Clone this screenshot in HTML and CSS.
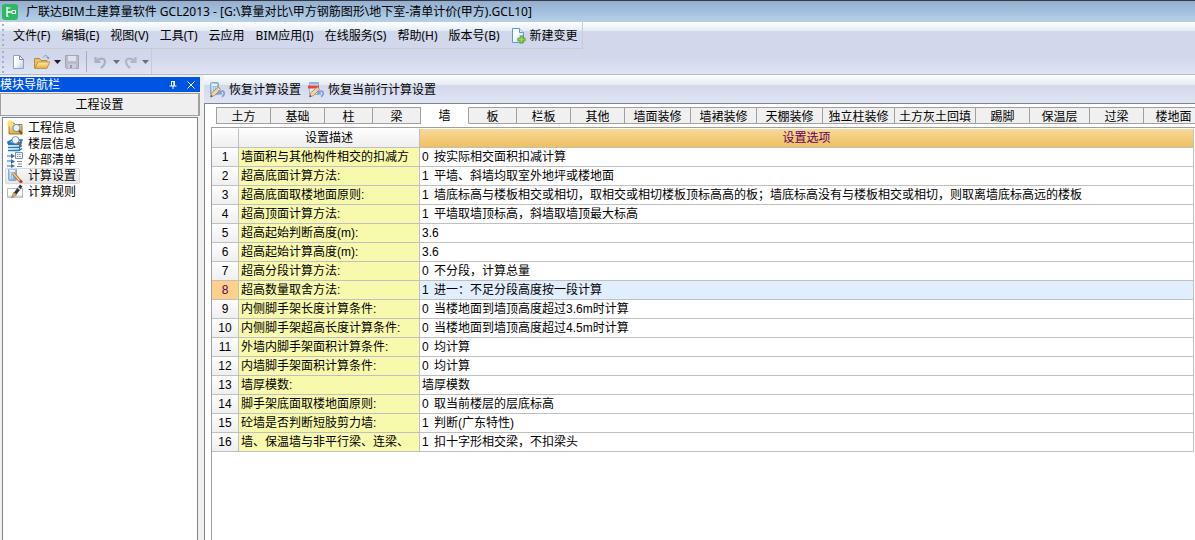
FILE: index.html
```html
<!DOCTYPE html>
<html lang="zh-CN">
<head>
<meta charset="utf-8">
<meta name="viewport" content="width=device-width, initial-scale=1">
<title>广联达BIM土建算量软件 GCL2013</title>
<link rel="stylesheet" href="styles.css">
</head>
<body>
<svg class="defs" width="0" height="0" aria-hidden="true">
  <defs>
    <linearGradient id="paper" x1="0" y1="0" x2="1" y2="1"><stop offset=".4" stop-color="#fff"/><stop offset="1" stop-color="#b4cadf"/></linearGradient>
    <linearGradient id="gold" x1="0" y1="0" x2="0" y2="1"><stop offset="0" stop-color="#fff0a8"/><stop offset="1" stop-color="#e5a83c"/></linearGradient>
    <linearGradient id="blue" x1="0" y1="0" x2="1" y2="1"><stop offset="0" stop-color="#c4dff8"/><stop offset="1" stop-color="#6a9fdb"/></linearGradient>
    <symbol id="calc" viewBox="0 0 16 16">
      <rect x="1.5" y=".5" width="8" height="12" rx="1" fill="url(#blue)" stroke="#85a9d4"/>
      <rect x="3" y="2" width="5" height="2" fill="#e8f5ff"/>
      <path d="M3 6h1M5 6h1M7 6h1M3 8h1M5 8h1M7 8h1M3 10h1M5 10h1" stroke="#fff" stroke-width="1.2"/>
    </symbol>
    <symbol id="restore" viewBox="0 0 16 16">
      <path d="M1.500 15l1-4L9.500 5l2 2.500-6 6z" fill="#f0d3a4" stroke="#a98262" stroke-width=".8"/>
      <path d="M1.500 15l.6-2.200 1.600 1.600z" fill="#5a4a48"/>
      <path d="M10 8.500v3.200h3M10.500 11c1-2.500 4.700-2.500 4.700.3 0 1.700-1 2.700-2.200 3.400" fill="none" stroke="#7c9fd6" stroke-width="1.700"/>
    </symbol>
  </defs>
</svg>

<header class="titlebar">
  <svg class="logo" viewBox="0 0 16 16" aria-hidden="true"><rect width="16" height="16" rx="3" fill="#2fb967"/><path d="M5 3v10M5 8h5" stroke="#fff" stroke-width="1.3" fill="none"/><path d="M5 4h3.500M5 12.300h1.500" stroke="#fff"/><path d="M10 6.500h3.500v3H10z" fill="none" stroke="#fff"/></svg>
  <h1 class="window-title">广联达BIM土建算量软件 GCL2013 - [G:\算量对比\甲方钢筋图形\地下室-清单计价(甲方).GCL10]</h1>
</header>

<div class="bars">
  <nav class="menubar" aria-label="主菜单">
    <button class="menu">文件(F)</button>
    <button class="menu">编辑(E)</button>
    <button class="menu">视图(V)</button>
    <button class="menu">工具(T)</button>
    <button class="menu">云应用</button>
    <button class="menu">BIM应用(I)</button>
    <button class="menu">在线服务(S)</button>
    <button class="menu">帮助(H)</button>
    <button class="menu">版本号(B)</button>
    <button class="menu with-icon"><svg class="icon" viewBox="0 0 16 16" aria-hidden="true"><path d="M1.500.5h7l4 4v10h-11z" fill="url(#paper)" stroke="#5b9ccb"/><path d="M8.500.5v4h4" fill="#d8ecf8" stroke="#5b9ccb"/><path d="M10.500 7.500v8M6.500 11.500h8" stroke="#4f9b2b" stroke-width="3.600"/><path d="M10.500 8.500v6M7.500 11.500h6" stroke="#96d65c" stroke-width="2"/></svg>新建变更</button>
  </nav>
  <div class="toolbar" role="toolbar" aria-label="标准">
    <button class="tool" aria-label="新建"><svg class="icon" viewBox="0 0 16 16"><path d="M3.500 1.500h6l4 4v9h-10z" fill="url(#paper)" stroke="#91a5bd"/><path d="M9.500 1.500v4h4z" fill="#e9f1f8" stroke="#7890ab"/></svg></button>
    <button class="tool open" aria-label="打开"><svg class="icon" viewBox="0 0 16 16"><path d="M.5 14V4.500h5l1.500 2h6V14z" fill="#ecc168" stroke="#b58a3c"/><path d="M.8 14.500l3-6.500h12l-3 6.500z" fill="url(#gold)" stroke="#c5943c"/><path d="M9 3.500c2-3 4-2 5 0" fill="none" stroke="#7f97b5"/><path d="M12.300 3h3.400l-1.500 2.500z" fill="#7f97b5"/></svg></button>
    <button class="drop" aria-label="打开选项"><svg class="arrow" viewBox="0 0 7 4"><path d="M0 0h7L3.500 4z" fill="#1c1c22"/></svg></button>
    <button class="tool" aria-label="保存" disabled><svg class="icon" viewBox="0 0 16 16"><path d="M1.500 1.500h13v13h-12l-1-1z" fill="#b7bbca" stroke="#a0a6b8"/><path d="M4 2h8v5H4z" fill="#dfe2ed"/><path d="M4 10h8v4.500H4z" fill="#c9cddb"/><path d="M6 11h2v3H6z" fill="#959bad"/></svg></button>
    <span class="divider"></span>
    <button class="tool" aria-label="撤销" disabled><svg class="icon" viewBox="0 0 16 16"><path d="M2.500 3v5h5M3 7.500C6 3.500 12.500 3.500 12 8c-.3 3-2 4.500-4 6" fill="none" stroke="#a9b0c4" stroke-width="2.200"/></svg></button>
    <button class="drop" aria-label="撤销选项" disabled><svg class="arrow" viewBox="0 0 7 4"><path d="M0 0h7L3.500 4z" fill="#6c6e79"/></svg></button>
    <button class="tool redo" aria-label="重做" disabled><svg class="icon" viewBox="0 0 16 16"><path d="M12.500 3v5h-5M12 7.500C9 3.500 2.500 3.500 3 8c.3 3 2 4.500 4 6" fill="none" stroke="#b0b6c9" stroke-width="2.200"/></svg></button>
    <button class="drop" aria-label="重做选项" disabled><svg class="arrow" viewBox="0 0 7 4"><path d="M0 0h7L3.500 4z" fill="#6c6e79"/></svg></button>
  </div>
</div>

<div class="workspace">
  <aside class="navigator">
    <div class="nav-title">
      <h2 class="nav-heading">模块导航栏</h2>
      <button class="nav-control" aria-label="固定"><svg viewBox="0 0 8 8"><path d="M2.500 0v5M2 .5h4M5.500 0v5M4.800 0v5M.5 5h7M4 5v3" stroke="#fff" fill="none"/></svg></button>
      <button class="nav-control" aria-label="关闭"><svg viewBox="0 0 8 8"><path d="M.5.5l7 7M7.500.5l-7 7" stroke="#fff" fill="none"/></svg></button>
    </div>
    <button class="group">工程设置</button>
    <ul class="nav-list">
      <li><a class="nav-item" href="#project"><svg class="icon" viewBox="0 0 16 16"><path d="M2 3h5l1 1.500h7V14H2z" fill="url(#gold)" stroke="#a77b27"/><path d="M3 0v7M0 3.500h6M1 1l4 5M5 1L1 6" stroke="#ffe066" stroke-width="1.300"/><circle cx="9.500" cy="8" r="3.500" fill="#e8f5ff" stroke="#7897b4" stroke-width="1.200"/><path d="M12 10.500l3 3.500" stroke="#8b4b20" stroke-width="2"/></svg>工程信息</a></li>
      <li><a class="nav-item" href="#floors"><svg class="icon" viewBox="0 0 16 16"><path d="M1 6l4-2h10l-2 3H1zM1 8.500h11l3-2M1 11.500h11l3-2M1 14.500h11l3-2" fill="#aad9f5" stroke="#2477b6" stroke-width="1.500"/><path d="M12.500 7v7.500" stroke="#2477b6"/><circle cx="8.500" cy="4" r="3.500" fill="#edf7ff" stroke="#899eb0"/><path d="M11 6.500l3 3" stroke="#a05b2c" stroke-width="2"/></svg>楼层信息</a></li>
      <li><a class="nav-item" href="#list"><svg class="icon" viewBox="0 0 16 16"><path d="M0 4h6M0 9h6M0 14h6" stroke="#6c9ddc" stroke-width="1.500"/><path d="M4 1.500L8 4 4 6.500zM4 7l4 2.500L4 12zM4 12l4 2-4 2z" fill="#3569b5"/><path d="M8.500.5h7v6h-7z" fill="#eef4fb" stroke="#7890ae"/><path d="M10 2.500h4M10 4.500h4" stroke="#7187a4" stroke-dasharray="1 .7"/><path d="M10 9.500h5M11 12h4M10 14.500h5" stroke="#7c828b"/></svg>外部清单</a></li>
      <li><a class="nav-item current" href="#calculation" aria-current="page"><svg class="icon" viewBox="0 0 16 16"><use href="#calc"/><path d="M6 5l8 9" stroke="#a66a32" stroke-width="3"/><path d="M6 5l7 8" stroke="#f5cf7e" stroke-width="1.500"/><path d="M13 12.500l2 2.200" stroke="#bc3434" stroke-width="2.500"/></svg>计算设置</a></li>
      <li><a class="nav-item" href="#rules"><svg class="icon" viewBox="0 0 16 16"><path d="M.5 4.500h15v9H.5z" fill="#fff" stroke="#b5babf"/><path d="M1 11.500h14v2H1z" fill="#d2d6da"/><path d="M7 8.500l6-8 2.500 2-6 8z" fill="#30343a"/><path d="M11 3.500l2 2" stroke="#eee" stroke-width="1.200"/><path d="M6.500 8.500l3 2.500L4.500 14z" fill="#dcb45c" stroke="#8e692e" stroke-width=".6"/></svg>计算规则</a></li>
    </ul>
  </aside>

  <main class="content">
    <div class="actions">
      <button class="action"><svg class="icon" viewBox="0 0 16 16" aria-hidden="true"><use href="#calc"/><use href="#restore"/></svg>恢复计算设置</button>
      <button class="action"><svg class="icon" viewBox="0 0 16 16" aria-hidden="true"><path d="M1.500.5h9v12h-9z" fill="#dce9f7" stroke="#9bb4d1"/><path d="M1 .5h10v2H1z" fill="#8fb5e0"/><path d="M0 3.500h11v3H0z" fill="#e8443c"/><use href="#restore"/></svg>恢复当前行计算设置</button>
    </div>
    <div class="sheet">
      <div class="tabs" role="tablist">
        <button class="tab c2" role="tab">土方</button>
        <button class="tab c2" role="tab">基础</button>
        <button class="tab c1" role="tab">柱</button>
        <button class="tab c1" role="tab">梁</button>
        <button class="tab c1 active" role="tab" aria-selected="true">墙</button>
        <button class="tab c1" role="tab">板</button>
        <button class="tab c2" role="tab">栏板</button>
        <button class="tab c2" role="tab">其他</button>
        <button class="tab c4" role="tab">墙面装修</button>
        <button class="tab c4" role="tab">墙裙装修</button>
        <button class="tab c4" role="tab">天棚装修</button>
        <button class="tab c5" role="tab">独立柱装修</button>
        <button class="tab c6" role="tab">土方灰土回填</button>
        <button class="tab c2" role="tab">踢脚</button>
        <button class="tab c3" role="tab">保温层</button>
        <button class="tab c2" role="tab">过梁</button>
        <button class="tab c3" role="tab">楼地面</button>
      </div>
      <div class="grid-frame">
        <table class="grid">
          <colgroup><col class="col-num"><col class="col-desc"><col></colgroup>
          <thead><tr><th class="corner"></th><th>设置描述</th><th class="selected-head">设置选项</th></tr></thead>
          <tbody>
            <tr><th>1</th><td class="desc">墙面积与其他构件相交的扣减方</td><td><span class="code">0</span>按实际相交面积扣减计算</td></tr>
            <tr><th>2</th><td class="desc">超高底面计算方法:</td><td><span class="code">1</span>平墙、斜墙均取室外地坪或楼地面</td></tr>
            <tr><th>3</th><td class="desc">超高底面取楼地面原则:</td><td><span class="code">1</span>墙底标高与楼板相交或相切，取相交或相切楼板顶标高高的板；墙底标高没有与楼板相交或相切，则取离墙底标高远的楼板</td></tr>
            <tr><th>4</th><td class="desc">超高顶面计算方法:</td><td><span class="code">1</span>平墙取墙顶标高，斜墙取墙顶最大标高</td></tr>
            <tr><th>5</th><td class="desc">超高起始判断高度(m):</td><td>3.6</td></tr>
            <tr><th>6</th><td class="desc">超高起始计算高度(m):</td><td>3.6</td></tr>
            <tr><th>7</th><td class="desc">超高分段计算方法:</td><td><span class="code">0</span>不分段，计算总量</td></tr>
            <tr class="selected"><th>8</th><td class="desc">超高数量取舍方法:</td><td><span class="code">1</span>进一：不足分段高度按一段计算</td></tr>
            <tr><th>9</th><td class="desc">内侧脚手架长度计算条件:</td><td><span class="code">0</span>当楼地面到墙顶高度超过3.6m时计算</td></tr>
            <tr><th>10</th><td class="desc">内侧脚手架超高长度计算条件:</td><td><span class="code">0</span>当楼地面到墙顶高度超过4.5m时计算</td></tr>
            <tr><th>11</th><td class="desc">外墙内脚手架面积计算条件:</td><td><span class="code">0</span>均计算</td></tr>
            <tr><th>12</th><td class="desc">内墙脚手架面积计算条件:</td><td><span class="code">0</span>均计算</td></tr>
            <tr><th>13</th><td class="desc">墙厚模数:</td><td>墙厚模数</td></tr>
            <tr><th>14</th><td class="desc">脚手架底面取楼地面原则:</td><td><span class="code">0</span>取当前楼层的层底标高</td></tr>
            <tr><th>15</th><td class="desc">砼墙是否判断短肢剪力墙:</td><td><span class="code">1</span>判断(广东特性)</td></tr>
            <tr><th>16</th><td class="desc">墙、保温墙与非平行梁、连梁、</td><td><span class="code">1</span>扣十字形相交梁，不扣梁头</td></tr>
          </tbody>
        </table>
      </div>
    </div>
  </main>
</div>
</body>
</html>
```
FILE: styles.css
```css
* { box-sizing: border-box; }

body {
  margin: 0;
  height: 100vh;
  display: flex;
  flex-direction: column;
  overflow: hidden;
  background: #f0f0f0;
  color: #000;
  font: 12px/16px "Liberation Sans", "Noto Sans CJK SC", sans-serif;
}

button {
  margin: 0;
  padding: 0;
  border: 0;
  background: none;
  color: inherit;
  font: inherit;
  white-space: nowrap;
}

h1, h2, ul { margin: 0; padding: 0; font-size: 12px; font-weight: normal; }

.defs { position: absolute; }
.icon { width: 16px; height: 16px; flex: none; display: block; }

.titlebar {
  height: 22px;
  flex: none;
  display: flex;
  align-items: center;
  gap: 8px;
  padding-left: 2px;
  border-top: 1px solid #38383e;
  background: linear-gradient(#93afd0, #b6d0e8);
}
.logo { width: 16px; height: 16px; }
.window-title, .bars, .actions { font-family: "Noto Sans", "Noto Sans CJK SC", sans-serif; }
.window-title { white-space: nowrap; }

.bars {
  flex: none;
  border-bottom: 1px solid #b4b8d0;
  background: linear-gradient(#fff 0, #e4eaf4 9px, #d2d8eb 9px, #d2d8eb 36px, #e0e5f5 100%);
}
.menubar, .toolbar {
  width: fit-content;
  display: flex;
  align-items: center;
  border-right: 1px solid #c9cbd2;
}
.menubar {
  height: 27px;
  gap: 11px;
  padding: 2px 4px 0 13px;
  border-bottom: 1px solid #c9cbd2;
  background: radial-gradient(circle at 3px 3px, #a7aec5 1px, transparent 1px) 0 0 / 5px 5px repeat-y;
}
.toolbar {
  height: 25px;
  padding-left: 10px;
  background: radial-gradient(circle at 3px 3px, #a7aec5 1px, transparent 1px) 0 0 / 5px 5px repeat-y;
}
.with-icon { display: flex; gap: 3px; }
.open { margin-left: 8px; }
.drop { width: 14px; display: flex; justify-content: center; }
.drop:last-child { width: 12px; }
.arrow { width: 7px; height: 4px; }
.divider { width: 1px; height: 21px; margin: 0 6px; background: #a8acbb; }

.workspace { flex: 1; min-height: 0; display: flex; gap: 4px; }

.navigator {
  width: 200px;
  flex: none;
  display: flex;
  flex-direction: column;
  padding-top: 2px;
}
.nav-title {
  height: 15px;
  display: flex;
  align-items: center;
  gap: 10px;
  padding-right: 5px;
  background: #0054e3;
  color: #fff;
}
.nav-heading { flex: 1; line-height: 16px; }
.nav-control, .nav-control svg { width: 8px; height: 8px; display: block; }
.group {
  height: 23px;
  margin-top: 1px;
  border: 1px solid #a0a0a0;
  border-right-width: 2px;
  background: #efefef;
}
.nav-list {
  flex: 1;
  margin: 1px 2px 0;
  padding-top: 2px;
  border: 1px solid #82828a;
  border-bottom: 0;
  background: #fff;
  list-style: none;
}
.nav-item {
  width: fit-content;
  height: 16px;
  display: flex;
  gap: 5px;
  margin-left: 2px;
  padding: 0 4px 0 2px;
  color: inherit;
  text-decoration: none;
}
.current {
  border-radius: 2px;
  outline: 1px solid #d9d9d9;
  outline-offset: -1px;
  background: linear-gradient(#f8f8f8, #e6e6e6);
}

.content { flex: 1; min-width: 0; display: flex; flex-direction: column; }
.actions {
  height: 28px;
  flex: none;
  display: flex;
  align-items: center;
  gap: 7px;
  padding: 1px 0 0 5px;
  background: linear-gradient(#fff 0, #e4eaf4 10px, #d2d8eb 10px, #e0e5f5 100%);
}
.action { display: flex; gap: 4px; }

.sheet {
  flex: 1;
  min-height: 0;
  display: flex;
  flex-direction: column;
  padding-top: 3px;
  border-top: 1px solid #82828a;
  border-left: 1px solid #82828a;
  background: #fff;
}
.tabs { display: flex; flex: none; margin-left: 11px; overflow: hidden; }
.tab {
  height: 17px;
  flex: none;
  line-height: 16px;
  padding-top: 1px;
  border: solid #a0a0a0;
  border-width: 1px 1px 1px 0;
  background: #f0f0f0;
}
.tab:first-child { border-left-width: 1px; width: 55px; }
.tab.active { padding-top: 0; border-color: #fff #a0a0a0 #fff #fff; background: #fff; }
.c1 { width: 48px; }
.c2 { width: 54px; }
.c3 { width: 60px; }
.c4 { width: 66px; }
.c5 { width: 72px; }
.c6 { width: 81px; }

.grid-frame {
  flex: 1;
  min-height: 0;
  margin: 3px 0 0 6px;
  padding: 1px 1px 0 0;
  border-top: 1px solid #a0a0a0;
  border-left: 1px solid #a0a0a0;
}
.grid {
  width: 100%;
  table-layout: fixed;
  border-spacing: 0;
  line-height: 18px;
}
.col-num { width: 27px; }
.col-desc { width: 181px; }
.grid th, .grid td {
  height: 19px;
  padding: 0 2px;
  overflow: hidden;
  border: solid #c0c0c0;
  border-width: 0 1px 1px 0;
  font-weight: normal;
  white-space: nowrap;
}
.grid th { background: linear-gradient(#fdfdfd, #efefef); }
.grid .desc { background: #f7faad; }
.grid .selected-head { background: linear-gradient(#f8d89d, #f0bf5e); color: #600060; }
.grid .selected th { background: #fdd08b; color: #600060; }
.grid .selected td:last-child { background: #e1eefd; }
.code { display: inline-block; width: 12px; }
```
